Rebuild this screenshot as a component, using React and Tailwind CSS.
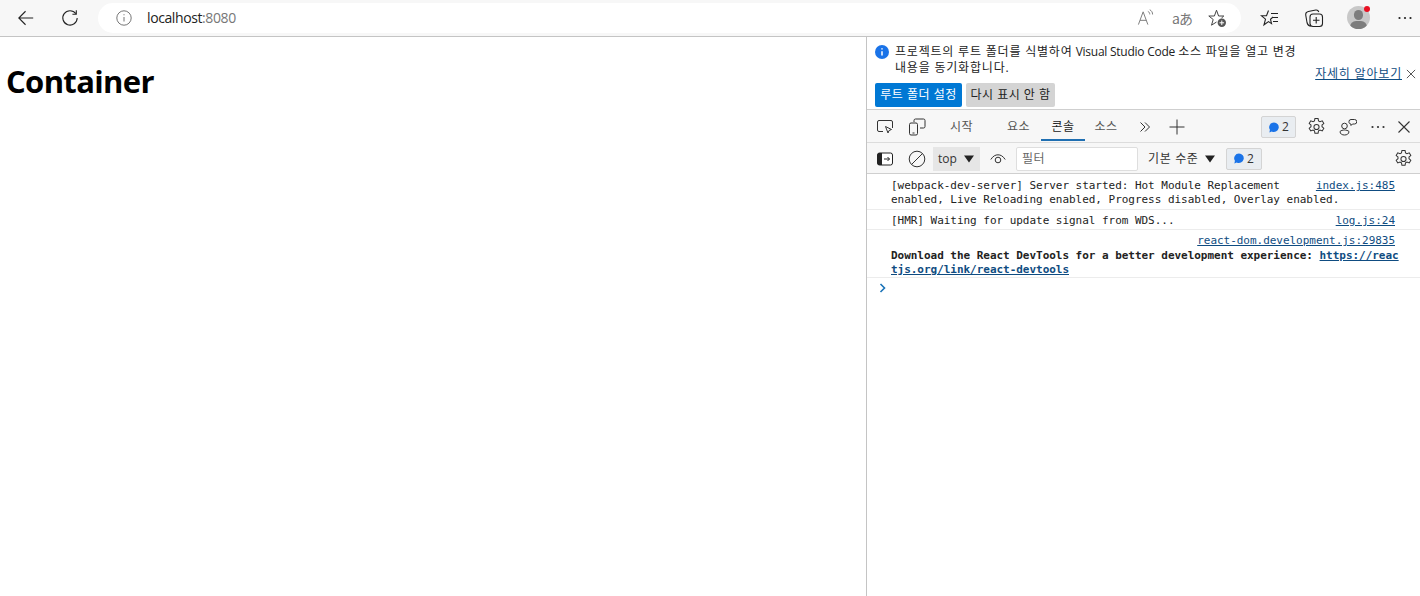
import React from "react";

const uiFont = "font-['Open_Sans','Noto_Sans_CJK_KR',sans-serif]";

function Gear({ className }) {
  return (
    <svg viewBox="1.500 1 15 16" className={className} fill="none" stroke="#333" strokeWidth="0.900">
      <path d="M7.600 1.500h2.800l.4 2.100 1.300.7 2-.8 1.400 2.400-1.600 1.400v1.400l1.600 1.400-1.400 2.400-2-.8-1.300.7-.4 2.100H7.600l-.4-2.100-1.300-.7-2 .8-1.400-2.400 1.600-1.400V7.300L2.500 5.900l1.400-2.400 2 .8 1.300-.7z" />
      <circle cx="9" cy="9" r="2.300" />
    </svg>
  );
}

function Dots({ color = "#333" }) {
  return (
    <svg viewBox="0 0 16 16" className="w-4 h-4" fill={color}>
      <circle cx="2.500" cy="8" r="1.100" />
      <circle cx="8" cy="8" r="1.100" />
      <circle cx="13.500" cy="8" r="1.100" />
    </svg>
  );
}

function Close({ size = "w-4 h-4" }) {
  return (
    <svg viewBox="0 0 16 16" className={size} fill="none" stroke="#333" strokeWidth="1.100">
      <path d="M2.500 2.500l11 11M13.500 2.500l-11 11" />
    </svg>
  );
}

function Caret() {
  return (
    <svg viewBox="0 0 10 8" className="w-[10px] h-2" fill="#222">
      <path d="M0 .5h10L5 7.500z" />
    </svg>
  );
}

function IssueBadge({ className }) {
  return (
    <div className={`flex items-center justify-center gap-[3px] bg-[#e9edf1] border border-[#d4d4d4] rounded-[2px] text-xs text-[#333] ${className}`}>
      <svg viewBox="0 0 12 12" className="w-[11px] h-[11px]" fill="#1a73e8">
        <path d="M6.500 .5a5.200 5.200 0 1 1-2.400 9.800L1.500 11.500l.6-3A5.200 5.200 0 0 1 6.500 .5z" />
      </svg>
      <span>2</span>
    </div>
  );
}

function AddressBar() {
  return (
    <div className="h-[37px] shrink-0 flex items-center bg-[#f7f7f7] border-b border-[#c4c4c4] pb-[1px]">
      <div className="w-[98px] shrink-0 flex items-center pl-[17px] gap-[26px]">
        <svg viewBox="0 0 20 20" className="w-[18px] h-[18px]" fill="none" stroke="#222" strokeWidth="1.200">
          <path d="M18 10H2M9.500 2.500L2 10l7.500 7.500" />
        </svg>
        <svg viewBox="0 0 20 20" className="w-[18px] h-[18px]" fill="none" stroke="#222" strokeWidth="1.200">
          <path d="M16.500 5.200A8 8 0 1 0 18 10" />
          <path d="M17 1.500v4.300h-4.300" />
        </svg>
      </div>
      <div className="w-[1143px] h-[30px] bg-white rounded-full flex items-center pl-[18px] pr-[14px]">
        <svg viewBox="0 0 16 16" className="w-4 h-4 shrink-0" fill="none" stroke="#777" strokeWidth="1">
          <circle cx="8" cy="8" r="7.200" />
          <path d="M8 7v4.500M8 4.200v1.100" />
        </svg>
        <span className={`ml-[15px] text-[14px] text-[#222] tracking-[-0.4px] ${uiFont}`}>
          localhost<span className="text-[#777]">:8080</span>
        </span>
        <div className="ml-auto flex items-center">
          <svg viewBox="0 0 18 18" className="w-[17px] h-[17px]" fill="none" stroke="#777" strokeWidth="1">
            <path d="M1.500 16.500L6.500 3l5 13.500M3.200 12h6.600M11.500 2.500c1.300.6 2 1.700 2 3.200M13.500 .8c2 1 3 2.800 3 5" />
          </svg>
          <span className="ml-[18px] w-[17px] text-[14px] leading-[18px] text-[#777] font-['Noto_Sans_CJK_JP',sans-serif] tracking-[-1px] whitespace-nowrap">aあ</span>
          <svg viewBox="0 0 20 20" className="ml-[18px] w-5 h-5" fill="none" stroke="#444" strokeWidth="1">
            <path d="M9.500 14l-5 3.200 1.700-5.700L1.800 8h5.600L9.500 2.200 11.600 8h5.200l-2.300 2" />
            <circle cx="14.800" cy="14.800" r="4.200" fill="#555" stroke="none" />
            <path d="M14.800 12.500v4.600M12.500 14.800h4.600" stroke="#fff" />
          </svg>
        </div>
      </div>
      <div className="flex-1 flex items-center pl-[19px] pr-[7px]">
        <svg viewBox="0 0 20 20" className="w-5 h-5" fill="none" stroke="#222" strokeWidth="1.100">
          <path d="M8.500 2.500L6.500 7.800H1.500l4 3.400-1.500 5.600 4.500-3.200 3 2-1-4.300L13 9" />
          <path d="M11 5.500h7M13 9.500h5M13 13.500h5" />
        </svg>
        <svg viewBox="0 0 20 20" className="w-5 h-5 ml-[24px]" fill="none" stroke="#222" strokeWidth="1.100">
          <path d="M7 18c-2.500 0-3.500-1.500-4-3.500L1.800 7.500c-.4-2 .5-3.500 2.500-4l7.500-1.500c1.500-.2 2.500.5 3 2" />
          <rect x="6" y="6" width="12.500" height="12.500" rx="3" />
          <path d="M12.200 9v6.500M9 12.200h6.500" />
        </svg>
        <div className="relative ml-[23px] w-[23px] h-[23px] rounded-full bg-[#c8c8c8] overflow-hidden">
          <div className="absolute left-[7px] top-[4px] w-[9px] h-[10px] rounded-full bg-[#7d7d7d]" />
          <div className="absolute left-[3px] top-[15px] w-[17px] h-[12px] rounded-full bg-[#7d7d7d]" />
        </div>
        <div className="w-[6px] h-[6px] rounded-full bg-[#e81123] -ml-[6px] -mt-[17px] z-10" />
        <div className="ml-auto">
          <Dots color="#222" />
        </div>
      </div>
    </div>
  );
}

function Ko({ children }) {
  return <span className="tracking-[0.8px]">{children}</span>;
}

function InfoBar() {
  return (
    <div className={`h-[73px] shrink-0 border-b border-[#cfcfcf] pl-[8px] pr-[3px] text-xs text-[#222] ${uiFont}`}>
      <div className="flex items-start pt-[7px]">
        <div className="w-[14px] h-[14px] mt-[1px] shrink-0 rounded-full bg-[#1a73e8] flex items-center justify-center">
          <svg viewBox="0 0 14 14" className="w-[14px] h-[14px]" fill="none" stroke="#fff" strokeWidth="1.500">
            <path d="M7 6.200v4.300M7 3.200v1.400" />
          </svg>
        </div>
        <p className="ml-[6px] w-[410px] leading-[16px] whitespace-nowrap">
          <Ko>프로젝트의 루트 폴더를 식별하여</Ko> <span className="tracking-[-0.25px]">Visual Studio Code</span> <Ko>소스 파일을 열고 변경</Ko>
          <br />
          <Ko>내용을 동기화합니다.</Ko>
        </p>
        <a className="ml-auto mt-[22px] text-[#0f4c81] underline whitespace-nowrap leading-[16px] tracking-[0.8px]">자세히 알아보기</a>
        <div className="ml-[3px] mt-[24px]">
          <Close size="w-[12px] h-[12px]" />
        </div>
      </div>
      <div className="flex gap-[4px] mt-[1px]">
        <button className="w-[87px] h-[24px] bg-[#0078d4] text-white rounded-[2px] tracking-[0.5px]">루트 폴더 설정</button>
        <button className="w-[89px] h-[24px] bg-[#d4d4d4] text-[#222] rounded-[2px] tracking-[0.5px]">다시 표시 안 함</button>
      </div>
    </div>
  );
}

function TabRow() {
  return (
    <div className={`h-[33px] shrink-0 flex items-center pt-[2px] bg-[#f7f7f7] border-b border-[#dcdcdc] text-xs text-[#555] ${uiFont}`}>
      <div className="w-[66px] shrink-0 flex items-center pl-[9px] gap-[14px]">
        <svg viewBox="0 0 18 16" className="w-[18px] h-4" fill="none" stroke="#333" strokeWidth="1">
          <path d="M7 12.500H3a1.500 1.500 0 0 1-1.500-1.500V3A1.500 1.500 0 0 1 3 1.500h12A1.500 1.500 0 0 1 16.500 3v6" />
          <path d="M9.500 7.500l6 3-2.500 1-1 2.500z" fill="#fff" />
        </svg>
        <svg viewBox="0 0 18 18" className="w-[18px] h-[18px]" fill="none" stroke="#333" strokeWidth="1">
          <path d="M6 4V2.500A1.500 1.500 0 0 1 7.500 1h8A1.500 1.500 0 0 1 17 2.500v6a1.500 1.500 0 0 1-1.500 1.500H12" />
          <rect x="1.500" y="5" width="8" height="12" rx="1.500" />
          <path d="M4.500 15h2" />
        </svg>
      </div>
      <span className="w-[57px] pl-[17px] tracking-[0.5px]">시작</span>
      <span className="w-[50px] pl-[3px] ml-[2px] text-center tracking-[0.5px]">요소</span>
      <div className="relative w-[44px] ml-[-1px] h-[31px] -mt-[2px] pt-[2px] flex items-center justify-center text-[#222] tracking-[0.5px]">
        콘솔
        <div className="absolute left-0 right-0 bottom-[1px] h-[2px] bg-[#1f6fb2]" />
      </div>
      <span className="w-[42px] text-center tracking-[0.5px]">소스</span>
      <svg viewBox="0 0 12 12" className="w-[12px] h-[12px] ml-[12px]" fill="none" stroke="#333" strokeWidth="1">
        <path d="M1.500 1.500L6 6l-4.500 4.500M6 1.500L10.500 6 6 10.500" />
      </svg>
      <svg viewBox="0 0 16 16" className="w-4 h-4 ml-[18px]" fill="none" stroke="#333" strokeWidth="1">
        <path d="M8 .5v15M.5 8h15" />
      </svg>
      <IssueBadge className="ml-[76px] w-[35px] h-[22px]" />
      <Gear className="w-[17px] h-[18px] ml-[12px]" />
      <svg viewBox="0 0 18 18" className="w-[18px] h-[18px] ml-[14px]" fill="none" stroke="#333" strokeWidth="1">
        <circle cx="5.500" cy="8" r="2.800" />
        <path d="M1 13.500c2-2 7-2 9 0 0 2.500-2.200 3.500-4.500 3.500S1 16 1 13.500z" />
        <path d="M10 3.500A2 2 0 0 1 12 1.500h3.500a2 2 0 0 1 0 4.500h-2l-1.500 1.500V6a2 2 0 0 1-2-2.500z" />
      </svg>
      <div className="ml-[13px]">
        <Dots />
      </div>
      <div className="ml-[10px]">
        <Close />
      </div>
    </div>
  );
}

function ConsoleToolbar() {
  return (
    <div className={`h-[31px] shrink-0 flex items-center pt-[1px] bg-[#f7f7f7] border-b border-[#cfcfcf] text-xs text-[#333] ${uiFont}`}>
      <svg viewBox="0 0 16 14" className="w-4 h-[14px] ml-[10px]">
        <rect x=".5" y="1" width="15" height="12" rx="2" fill="#fff" stroke="#222" />
        <path d="M2 1h3v12H2a1.500 1.500 0 0 1-1.500-1.500v-9A1.500 1.500 0 0 1 2 1z" fill="#222" />
        <path d="M7 7h5.500M10.500 5l2 2-2 2" fill="none" stroke="#222" />
      </svg>
      <svg viewBox="0 0 18 18" className="w-[18px] h-[18px] ml-[15px]" fill="none" stroke="#333" strokeWidth="1">
        <circle cx="9" cy="9" r="7.800" />
        <path d="M3.500 14.500l11-11" />
      </svg>
      <div className="w-[47px] h-[24px] ml-[7px] bg-[#e6e6e6] flex items-center pl-[5px] gap-[7px]">
        <span>top</span>
        <Caret />
      </div>
      <svg viewBox="0 0 16 12" className="w-4 h-3 ml-[10px]" fill="none" stroke="#333" strokeWidth="1">
        <path d="M.8 6.500C3 3 5.500 1.800 8 1.800s5 1.200 7.200 4.700" />
        <circle cx="8" cy="7" r="2.800" />
      </svg>
      <div className="w-[122px] h-[24px] ml-[10px] bg-white border border-[#dedede] rounded-[2px] flex items-center pl-[5px] text-[#666] tracking-[0.5px]">
        필터
      </div>
      <span className="ml-[10px] tracking-[0.65px]">기본 수준</span>
      <div className="ml-[6px]">
        <Caret />
      </div>
      <IssueBadge className="ml-[11px] w-[36px] h-[22px]" />
      <Gear className="w-[17px] h-[18px] ml-auto mr-[8px]" />
    </div>
  );
}

function Source({ children }) {
  return <a className="text-[#0f4c81] underline whitespace-nowrap">{children}</a>;
}

function Messages() {
  return (
    <div className="font-['DejaVu_Sans_Mono',monospace] text-[11px] leading-[14px] tracking-[-0.03px] text-[#222] whitespace-nowrap">
      <div className="h-[36px] border-b border-[#ececec] pl-[24px] pr-[21px] pt-[5px]">
        <div className="flex justify-between pr-[4px]">
          <span>[webpack-dev-server] Server started: Hot Module Replacement</span>
          <Source>index.js:485</Source>
        </div>
        <div>enabled, Live Reloading enabled, Progress disabled, Overlay enabled.</div>
      </div>
      <div className="h-[20px] border-b border-[#ececec] pl-[24px] pr-[25px] pt-[4px] flex justify-between">
        <span>[HMR] Waiting for update signal from WDS...</span>
        <Source>log.js:24</Source>
      </div>
      <div className="h-[48px] border-b border-[#ececec] pl-[24px] pr-[21px] pt-[4px]">
        <div className="text-right pr-[4px] mb-[1px]">
          <Source>react-dom.development.js:29835</Source>
        </div>
        <div className="font-bold">
          Download the React DevTools for a better development experience: <a className="text-[#0f4c81] underline">https://reac</a>
          <br />
          <a className="text-[#0f4c81] underline">tjs.org/link/react-devtools</a>
        </div>
      </div>
      <div className="pl-[12px] pt-[5px]">
        <svg viewBox="0 0 8 10" className="w-2 h-[10px]" fill="none" stroke="#1a73b8" strokeWidth="1.600">
          <path d="M1.500 1l4 4-4 4" />
        </svg>
      </div>
    </div>
  );
}

export default function App() {
  return (
    <div className="w-[1420px] h-[596px] flex flex-col bg-white overflow-hidden">
      <AddressBar />
      <div className="flex-1 flex min-h-0">
        <div className="w-[866px] shrink-0 pl-[6px] pt-[23px]">
          <h1 className="font-['Open_Sans',sans-serif] font-bold text-[31px] leading-[42px] text-black tracking-[-0.65px]">Container</h1>
        </div>
        <div className="flex-1 flex flex-col border-l border-[#c4c4c4]">
          <InfoBar />
          <TabRow />
          <ConsoleToolbar />
          <Messages />
        </div>
      </div>
    </div>
  );
}
